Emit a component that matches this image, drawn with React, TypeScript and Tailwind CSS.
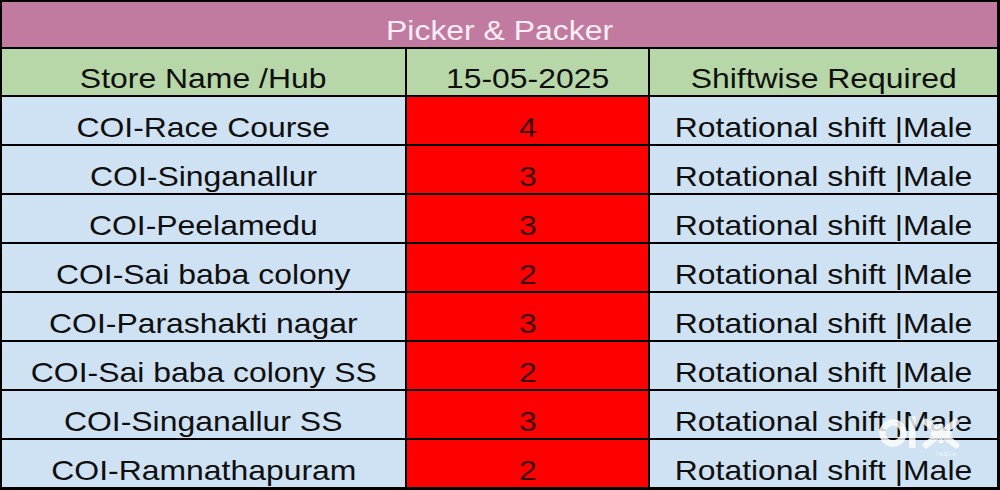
import React from "react";

const ROWS: Array<{ store: string; count: number }> = [
	{ store: "COI-Race Course", count: 4 },
	{ store: "COI-Singanallur", count: 3 },
	{ store: "COI-Peelamedu", count: 3 },
	{ store: "COI-Sai baba colony", count: 2 },
	{ store: "COI-Parashakti nagar", count: 3 },
	{ store: "COI-Sai baba colony SS", count: 2 },
	{ store: "COI-Singanallur SS", count: 3 },
	{ store: "COI-Ramnathapuram", count: 2 },
];

function Txt({ children }: { children: React.ReactNode }) {
	return <span className="inline-block scale-x-[1.14] whitespace-nowrap">{children}</span>;
}

const cell = "flex items-end justify-center text-[28px] leading-[32px]";

function OlxMark() {
	return (
		<div className="absolute left-[878px] top-[412px] opacity-80">
			<svg width="88" height="40" viewBox="0 0 88 40" fill="none">
				<circle cx="15" cy="21" r="10.5" stroke="#fff" strokeWidth="6.5" />
				<rect x="31" y="4" width="6.5" height="32" rx="1" fill="#fff" />
				<path d="M48 10 L78 33 M78 10 L48 33" stroke="#fff" strokeWidth="6.5" strokeLinecap="round" />
				<path d="M55 21.5 H71 M63 14 V29" stroke="#fff" strokeWidth="5" strokeLinecap="round" />
			</svg>
			<span className="absolute left-[58px] top-[39px] text-[6px] leading-[6px] tracking-[1px] text-white">
				INDIA
			</span>
		</div>
	);
}

export default function App() {
	return (
		<div className="relative h-[490px] w-[1000px] overflow-hidden bg-black font-['Liberation_Sans',Arial,sans-serif] text-[#0f0f0f]">
			<div className="grid grid-cols-[403px_241px_347px] gap-[2px] pl-[2px] pt-[2px]">
				<div className={`${cell} col-span-3 h-[45px] bg-[#c27ba0] text-[#f8eef4]`}>
					<Txt>Picker &amp; Packer</Txt>
				</div>

				<div className={`${cell} h-[46px] bg-[#b7d7a9]`}>
					<Txt>Store Name /Hub</Txt>
				</div>
				<div className={`${cell} h-[46px] bg-[#b7d7a9]`}>
					<Txt>15-05-2025</Txt>
				</div>
				<div className={`${cell} h-[46px] bg-[#b7d7a9]`}>
					<Txt>Shiftwise Required</Txt>
				</div>

				{ROWS.map((r) => (
					<React.Fragment key={r.store}>
						<div className={`${cell} h-[47px] bg-[#cfe2f3]`}>
							<Txt>{r.store}</Txt>
						</div>
						<div className={`${cell} h-[47px] bg-[#ff0000] text-[#3a0b0b]`}>
							<Txt>{r.count}</Txt>
						</div>
						<div className={`${cell} h-[47px] bg-[#cfe2f3]`}>
							<Txt>Rotational shift |Male</Txt>
						</div>
					</React.Fragment>
				))}
			</div>
			<OlxMark />
		</div>
	);
}
